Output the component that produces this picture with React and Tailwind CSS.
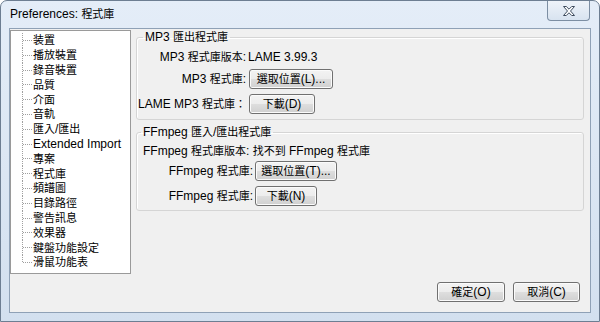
import React from "react";

const CJK = /([\u2e80-\u9fff\uf900-\ufaff\uff00-\uffef\u3000-\u303f]+)/;

function T({ children }) {
  const parts = String(children).split(CJK);
  return (
    <>
      {parts.map((p, i) =>
        i % 2 === 1 ? (
          <span key={i} className="text-[11px]">
            {p}
          </span>
        ) : (
          <React.Fragment key={i}>{p}</React.Fragment>
        )
      )}
    </>
  );
}

function Btn({ className, children }) {
  return (
    <button
      className={
        "h-[20px] shrink-0 rounded-[3px] border border-[#707070] bg-[linear-gradient(#f3f3f3_0%,#ececec_50%,#dedede_50%,#d0d0d0_100%)] shadow-[inset_0_0_0_1px_#fbfbfb] text-[12px] leading-none text-black flex items-center justify-center " +
        className
      }
    >
      <span className="whitespace-nowrap">
        <T>{children}</T>
      </span>
    </button>
  );
}

const treeItems = [
  "装置",
  "播放裝置",
  "錄音裝置",
  "品質",
  "介面",
  "音軌",
  "匯入/匯出",
  "Extended Import",
  "專案",
  "程式庫",
  "頻譜圖",
  "目錄路徑",
  "警告訊息",
  "效果器",
  "鍵盤功能設定",
  "滑鼠功能表",
];

function TreeItem({ label, last }) {
  return (
    <div className="flex items-center h-[14.8px]">
      <svg width="11" height="15" className="shrink-0 self-stretch" viewBox="0 0 11 15" preserveAspectRatio="none">
        <line x1="0.5" y1="0" x2="0.5" y2={last ? 7.5 : 15} stroke="#a0a0a0" strokeWidth="1" strokeDasharray="1 1" />
        <line x1="1" y1="7.5" x2="10" y2="7.5" stroke="#a0a0a0" strokeWidth="1" strokeDasharray="1 1" />
      </svg>
      <span className="whitespace-nowrap leading-[14px]">
        <T>{label}</T>
      </span>
    </div>
  );
}

export default function App() {
  return (
    <div
      className="relative w-[600px] h-[322px] flex flex-col rounded-t-[7px] border border-[#6d7e92] bg-[linear-gradient(#e4edf8,#d3e0ef)] text-[12px] text-black overflow-hidden"
      style={{ fontFamily: '"Liberation Sans", "Noto Sans CJK TC", sans-serif' }}
    >
      {/* title bar */}
      <div className="h-[27px] shrink-0 flex items-center pl-[9px] pb-[1px]">
        <span className="leading-none">
          <T>Preferences: 程式庫</T>
        </span>
      </div>
      <div className="absolute right-[9px] top-0 w-[43px] h-[20px] rounded-b-[4px] border border-t-0 border-[#7c8ea3] bg-[linear-gradient(#eef3f9,#d8e3f0)] flex items-center justify-center">
        <svg width="12" height="10" viewBox="0 0 12 10">
          <path
            d="M0.5 0.5 L3.3 0.5 L6 3.2 L8.7 0.5 L11.5 0.5 L7.5 5 L11.5 9.5 L8.7 9.5 L6 6.8 L3.3 9.5 L0.5 9.5 L4.5 5 Z"
            fill="#ffffff"
            stroke="#3e4c5e"
            strokeWidth="1"
            strokeLinejoin="round"
          />
        </svg>
      </div>

      {/* client area */}
      <div className="mx-[8px] mb-[8px] flex-1 border border-[#8fa1b6] bg-[#f0f0f0] flex flex-col">
        <div className="flex">
          {/* tree */}
          <div className="mt-[1px] w-[121px] h-[244px] border border-[#9a9a9a] bg-white pt-[2px] pl-[11px]">
            {treeItems.map((t, i) => (
              <TreeItem key={t} label={t} last={i === treeItems.length - 1} />
            ))}
          </div>

          {/* groups */}
          <div className="ml-[5px] mt-[1px] w-[448px] flex flex-col">
            <fieldset className="border border-[#d5d5d5] rounded-[3px] pb-[5px] shadow-[inset_1px_1px_0_#ffffff]">
              <legend className="ml-[6px] px-[2px] leading-[14px]">
                <T>MP3 匯出程式庫</T>
              </legend>
              <div className="flex items-center h-[20px] mt-[3px]">
                <span className="w-[109px] text-right whitespace-nowrap">
                  <T>MP3 程式庫版本:</T>
                </span>
                <span className="ml-[2px] whitespace-nowrap">LAME 3.99.3</span>
              </div>
              <div className="flex items-center h-[20px] mt-[2px]">
                <span className="w-[109px] text-right whitespace-nowrap">
                  <T>MP3 程式庫:</T>
                </span>
                <Btn className="ml-[3px] w-[84px]">選取位置(L)...</Btn>
              </div>
              <div className="flex items-center h-[20px] mt-[5px]">
                <span className="w-[109px] text-right whitespace-nowrap">
                  <T>LAME MP3 程式庫：</T>
                </span>
                <Btn className="ml-[3px] w-[66px]">下載(D)</Btn>
              </div>
            </fieldset>

            <fieldset className="mt-[5px] border border-[#d5d5d5] rounded-[3px] pb-[4px] shadow-[inset_1px_1px_0_#ffffff]">
              <legend className="ml-[4px] px-[2px] leading-[14px]">
                <T>FFmpeg 匯入/匯出程式庫</T>
              </legend>
              <div className="flex items-center h-[20px] mt-[2px] pl-[6px]">
                <span className="whitespace-pre">
                  <T>FFmpeg 程式庫版本: 找不到 FFmpeg 程式庫</T>
                </span>
              </div>
              <div className="flex items-center h-[20px]">
                <span className="w-[116px] text-right whitespace-nowrap">
                  <T>FFmpeg 程式庫:</T>
                </span>
                <Btn className="ml-[2px] w-[82px]">選取位置(T)...</Btn>
              </div>
              <div className="flex items-center h-[20px] mt-[5px]">
                <span className="w-[116px] text-right whitespace-nowrap">
                  <T>FFmpeg 程式庫:</T>
                </span>
                <Btn className="ml-[2px] w-[62px]">下載(N)</Btn>
              </div>
            </fieldset>
          </div>
        </div>

        {/* bottom buttons */}
        <div className="mt-[8px] flex justify-end gap-[8px] pr-[10px]">
          <Btn className="w-[68px]">確定(O)</Btn>
          <Btn className="w-[67px]">取消(C)</Btn>
        </div>
      </div>
    </div>
  );
}
